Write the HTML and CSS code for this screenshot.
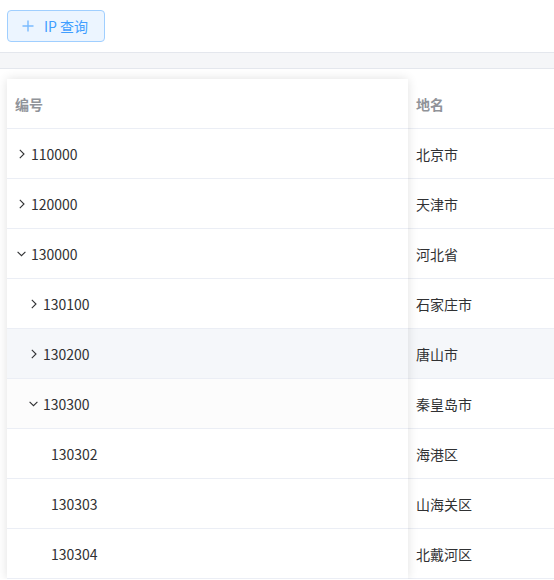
FILE: index.html
```html
<!DOCTYPE html>
<html lang="zh-CN">
<head>
<meta charset="utf-8">
<link rel="stylesheet" href="styles.css">
</head>
<body>
<div class="toolbar">
  <button class="btn">
    <svg class="plus" width="12" height="12" viewBox="0 0 12 12"><path d="M6 0.5V11.5M0.5 6H11.5" stroke="currentColor" stroke-width="1.4" fill="none"/></svg>
    <span>IP 查询</span>
  </button>
</div>
<div class="band"></div>
<div class="table">
  <div class="fixed">
    <div class="cell head">编号</div>
    <div class="cell"><span class="caret"><svg width="6" height="10" viewBox="0 0 6 10"><path d="M0.8 0.8L5 5L0.8 9.2" stroke="#303133" stroke-width="1.1" fill="none"/></svg></span>110000</div>
    <div class="cell"><span class="caret"><svg width="6" height="10" viewBox="0 0 6 10"><path d="M0.8 0.8L5 5L0.8 9.2" stroke="#303133" stroke-width="1.1" fill="none"/></svg></span>120000</div>
    <div class="cell"><span class="caret"><svg width="9" height="6" viewBox="0 0 9 6"><path d="M0.6 0.8L4.5 4.7L8.4 0.8" stroke="#303133" stroke-width="1.1" fill="none"/></svg></span>130000</div>
    <div class="cell l1"><span class="caret"><svg width="6" height="10" viewBox="0 0 6 10"><path d="M0.8 0.8L5 5L0.8 9.2" stroke="#303133" stroke-width="1.1" fill="none"/></svg></span>130100</div>
    <div class="cell l1 hover"><span class="caret"><svg width="6" height="10" viewBox="0 0 6 10"><path d="M0.8 0.8L5 5L0.8 9.2" stroke="#303133" stroke-width="1.1" fill="none"/></svg></span>130200</div>
    <div class="cell l1 dim"><span class="caret"><svg width="9" height="6" viewBox="0 0 9 6"><path d="M0.6 0.8L4.5 4.7L8.4 0.8" stroke="#303133" stroke-width="1.1" fill="none"/></svg></span>130300</div>
    <div class="cell l2"><span class="leaf"></span>130302</div>
    <div class="cell l2"><span class="leaf"></span>130303</div>
    <div class="cell l2"><span class="leaf"></span>130304</div>
  </div>
  <div class="rest">
    <div class="cell head">地名</div>
    <div class="cell">北京市</div>
    <div class="cell">天津市</div>
    <div class="cell">河北省</div>
    <div class="cell">石家庄市</div>
    <div class="cell hover">唐山市</div>
    <div class="cell">秦皇岛市</div>
    <div class="cell">海港区</div>
    <div class="cell">山海关区</div>
    <div class="cell">北戴河区</div>
  </div>
</div>
</body>
</html>
```
FILE: styles.css
```css
html, body {
  margin: 0;
  padding: 0;
  background: #fff;
  overflow: hidden;
  font-family: "Noto Sans CJK SC", "Noto Sans", sans-serif;
  font-size: 14px;
  color: #303133;
}
.toolbar {
  padding: 10px 7px 0;
  height: 42px;
  box-sizing: border-box;
}
.btn {
  display: flex;
  align-items: center;
  width: 98px;
  height: 32px;
  box-sizing: border-box;
  padding: 0 0 0 14px;
  border: 1px solid #a0cfff;
  border-radius: 4px;
  background: #ecf5ff;
  color: #409eff;
  font-family: inherit;
  font-size: 14px;
}
.plus {
  color: #79bbff;
  margin-right: 10px;
}
.band {
  margin-top: 10px;
  height: 15px;
  background: #f5f6f8;
  border-top: 1px solid #e4e7ed;
  border-bottom: 1px solid #e4e7ed;
}
.table {
  display: flex;
  margin: 10px 0 0 7px;
}
.fixed {
  width: 401px;
  flex: none;
  background: #fff;
  box-shadow: 0 0 10px rgba(0, 0, 0, 0.12);
  position: relative;
  z-index: 1;
}
.rest {
  flex: 1;
  min-width: 0;
}
.cell {
  height: 50px;
  box-sizing: border-box;
  border-bottom: 1px solid #ebeef5;
  display: flex;
  align-items: center;
  padding-left: 8px;
  white-space: nowrap;
}
.head {
  color: #909399;
  font-weight: bold;
}
.caret {
  width: 16px;
  padding-right: 3px;
  box-sizing: border-box;
  display: flex;
  align-items: center;
  justify-content: center;
}
.l1 { padding-left: 20px; }
.l2 { padding-left: 32px; }
.leaf {
  display: inline-block;
  width: 12px;
}
.hover { background: #f5f7fa; }
.dim { background: #fcfcfc; }
```
